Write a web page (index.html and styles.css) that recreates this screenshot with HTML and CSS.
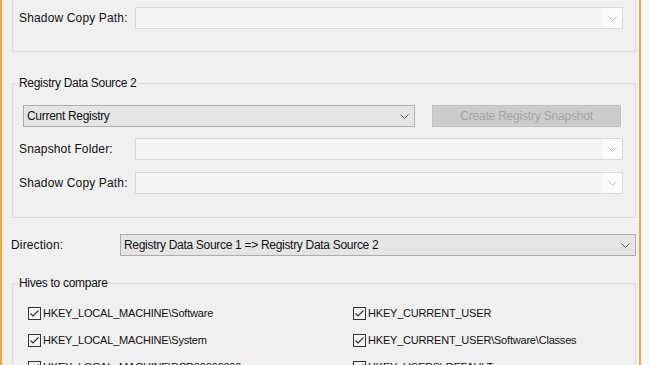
FILE: index.html
```html
<!DOCTYPE html>
<html lang="en">
<head>
  <meta charset="UTF-8">
  <title>Registry Compare</title>
  <link rel="stylesheet" href="styles.css">
</head>
<body>
  <div class="window">

    <!-- Source 1 group, scrolled partly out of view -->
    <div class="group group-cut">
      <div class="row">
        <span class="label">Shadow Copy Path:</span>
        <div class="combo disabled">
          <span class="combo-text"></span>
          <span class="combo-arrow">
            <svg width="9" height="5" viewBox="0 0 9 5"><polyline points="0.5,0.5 4.5,4.5 8.5,0.5"/></svg>
          </span>
        </div>
      </div>
    </div>

    <fieldset class="group source2">
      <legend>Registry Data Source 2</legend>
      <div class="row first">
        <div class="combo select source-select">
          <span class="combo-text">Current Registry</span>
          <span class="combo-arrow">
            <svg width="9" height="5" viewBox="0 0 9 5"><polyline points="0.5,0.5 4.5,4.5 8.5,0.5"/></svg>
          </span>
        </div>
        <button class="btn" disabled>Create Registry Snapshot</button>
      </div>
      <div class="row">
        <span class="label">Snapshot Folder:</span>
        <div class="combo disabled">
          <span class="combo-text"></span>
          <span class="combo-arrow">
            <svg width="9" height="5" viewBox="0 0 9 5"><polyline points="0.5,0.5 4.5,4.5 8.5,0.5"/></svg>
          </span>
        </div>
      </div>
      <div class="row">
        <span class="label">Shadow Copy Path:</span>
        <div class="combo disabled">
          <span class="combo-text"></span>
          <span class="combo-arrow">
            <svg width="9" height="5" viewBox="0 0 9 5"><polyline points="0.5,0.5 4.5,4.5 8.5,0.5"/></svg>
          </span>
        </div>
      </div>
    </fieldset>

    <div class="direction">
      <span class="label">Direction:</span>
      <div class="combo select">
        <span class="combo-text">Registry Data Source 1 =&gt; Registry Data Source 2</span>
        <span class="combo-arrow">
          <svg width="9" height="5" viewBox="0 0 9 5"><polyline points="0.5,0.5 4.5,4.5 8.5,0.5"/></svg>
        </span>
      </div>
    </div>

    <fieldset class="group hives">
      <legend>Hives to compare</legend>
      <div class="hive-grid" id="hive-grid"></div>
    </fieldset>

  </div>

  <script>
    // hive list, left column then right column per row
    const hives = [
      'HKEY_LOCAL_MACHINE\\Software', 'HKEY_CURRENT_USER',
      'HKEY_LOCAL_MACHINE\\System', 'HKEY_CURRENT_USER\\Software\\Classes',
      'HKEY_LOCAL_MACHINE\\BCD00000000', 'HKEY_USERS\\.DEFAULT'
    ];

    const grid = document.getElementById('hive-grid');
    hives.forEach(name => {
      const item = document.createElement('label');
      item.className = 'check';
      item.innerHTML = `
        <svg class="box" width="13" height="13" viewBox="0 0 13 13">
          <rect x="0.5" y="0.5" width="12" height="12"/>
          <polyline points="2.5,6.5 5,9 10.5,3.5"/>
        </svg>
        <span></span>
      `;
      item.querySelector('span').textContent = name;
      grid.appendChild(item);
    });
  </script>
</body>
</html>
```

FILE: styles.css
```css
body {
  margin: 0;
  background: #f7f7f7;
  font-family: "Liberation Sans", Arial, sans-serif;
  font-size: 12px;
  letter-spacing: -0.3px;
  color: #111;
  overflow: hidden;
}
.window {
  width: 634px;
  height: 365px;
  padding: 0 3px 0 0;
  background: #f0f0f0;
  border-left: 2px solid #f0a646;
  border-right: 2px solid #f0a646;
  overflow: hidden;
}
.group {
  margin: 0 0 0 10px;
  padding: 0 12px 0 6px;
  border: 1px solid #dcdcdc;
  min-inline-size: 0;
}
.group legend {
  margin-left: 0;
  padding: 0 2px 0 0;
  line-height: 14px;
}
.group-cut {
  border-top: none;
  height: 44px;
  padding-top: 7px;
}
.row {
  display: flex;
  align-items: center;
  height: 22px;
}
.row + .row {
  margin-top: 11px;
}
.row + .row + .row {
  margin-top: 12px;
}
.label {
  width: 116px;
  flex: none;
  letter-spacing: 0.15px;
}
.combo {
  flex: 1;
  height: 22px;
  box-sizing: border-box;
  display: flex;
  align-items: center;
  border: 1px solid #d9d9d9;
}
.combo-text {
  flex: 1;
  padding-left: 3px;
  white-space: nowrap;
}
.combo-arrow {
  width: 19px;
  align-self: stretch;
  display: flex;
  align-items: center;
  justify-content: center;
}
.combo svg polyline {
  fill: none;
  stroke-width: 1;
}
.combo.disabled {
  background: #f5f5f5;
}
.combo.disabled .combo-arrow {
  background: #fcfcfc;
}
.combo.disabled svg polyline {
  stroke: #bdbdbd;
}
.combo.select {
  background: #e5e5e5;
  border-color: #adadad;
}
.combo.select svg polyline {
  stroke: #555;
}

/* Source 2 */
.source2 {
  margin-top: 24px;
  padding-top: 15px;
  padding-bottom: 23px;
}
.source2 .row.first {
  padding-left: 4px;
}
.source-select {
  flex: none;
  width: 392px;
}
.btn {
  margin-left: 17px;
  width: 189px;
  height: 22px;
  border: 1px solid #c2c2c2;
  background: #cccccc;
  color: #a3a3a3;
  font: inherit;
  letter-spacing: -0.2px;
}

/* Direction */
.direction {
  display: flex;
  align-items: center;
  margin-top: 16px;
  padding-left: 9px;
}
.direction .label {
  width: 109px;
}

/* Hives */
.hives {
  margin-top: 20px;
  padding: 13px 12px 0 6px;
}
.hive-grid {
  display: grid;
  grid-template-columns: 325px 1fr;
  row-gap: 7px;
  padding-left: 9px;
}
.check {
  display: flex;
  align-items: center;
  height: 20px;
  font-size: 11px;
  letter-spacing: -0.2px;
  white-space: nowrap;
}
.check .box {
  flex: none;
  margin-right: 2px;
}
.check .box rect {
  fill: #f4f4f4;
  stroke: #333;
}
.check .box polyline {
  fill: none;
  stroke: #333;
  stroke-width: 1.2;
}
```
